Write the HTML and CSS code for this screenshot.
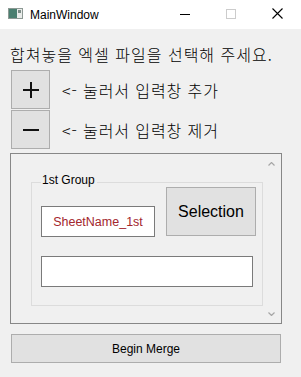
FILE: index.html
```html
<!DOCTYPE html>
<html lang="ko">
  <head>
    <meta charset="UTF-8" />
    <meta name="viewport" content="width=device-width, initial-scale=1.0" />
    <title>MainWindow</title>
    <link rel="stylesheet" href="styles.css">
  </head>

  <body>
    <div class="window">
      <div class="titlebar">
        <svg class="app-icon" width="15" height="11" viewBox="0 0 15 11">
          <rect x="0.5" y="0.5" width="14" height="10" fill="#e9ecea" stroke="#8d9994" />
          <rect x="1" y="1" width="8" height="9" fill="#4a7f70" />
          <rect x="10" y="2" width="3" height="3" fill="#7d8c87" />
        </svg>
        <span class="title">MainWindow</span>
        <div class="controls">
          <div class="control">
            <svg width="10" height="10" viewBox="0 0 10 10">
              <line x1="0" y1="5.5" x2="10" y2="5.5" stroke="#000" stroke-width="1" />
            </svg>
          </div>
          <div class="control">
            <svg width="10" height="10" viewBox="0 0 10 10">
              <rect x="0.5" y="0.5" width="9" height="9" fill="none" stroke="#cccccc" stroke-width="1" />
            </svg>
          </div>
          <div class="control">
            <svg width="11" height="11" viewBox="0 0 11 11">
              <path d="M0.5 0.5 L10.5 10.5 M10.5 0.5 L0.5 10.5" stroke="#000" stroke-width="1.1" />
            </svg>
          </div>
        </div>
      </div>

      <div class="content">
        <p class="prompt">합쳐놓을 엑셀 파일을 선택해 주세요.</p>

        <div class="row">
          <button class="square-btn" type="button">
            <svg width="16" height="16" viewBox="0 0 16 16">
              <path d="M0 8 H16 M8 0 V16" stroke="#111" stroke-width="2" />
            </svg>
          </button>
          <span class="hint">&lt;- 눌러서 입력창 추가</span>
        </div>
        <div class="row">
          <button class="square-btn" type="button">
            <svg width="16" height="16" viewBox="0 0 16 16">
              <path d="M0 8 H16" stroke="#111" stroke-width="2" />
            </svg>
          </button>
          <span class="hint">&lt;- 눌러서 입력창 제거</span>
        </div>

        <div class="scroll-area">
          <div class="scroll-body">
            <fieldset class="group">
              <legend>1st Group</legend>
              <div class="group-top">
                <div class="field sheet-name">SheetName_1st</div>
                <button class="select-btn" type="button">Selection</button>
              </div>
              <div class="field file-path"></div>
            </fieldset>
          </div>
          <div class="scrollbar">
            <svg width="7" height="4" viewBox="0 0 7 4">
              <path d="M0.5 3.5 L3.5 0.5 L6.5 3.5" fill="none" stroke="#a6a6a6" stroke-width="1.2" />
            </svg>
            <svg width="7" height="4" viewBox="0 0 7 4">
              <path d="M0.5 0.5 L3.5 3.5 L6.5 0.5" fill="none" stroke="#a6a6a6" stroke-width="1.2" />
            </svg>
          </div>
        </div>

        <button class="merge-btn" type="button">Begin Merge</button>
      </div>
    </div>
  </body>
</html>
```

FILE: styles.css
```css
* {
  margin: 0;
  padding: 0;
  box-sizing: border-box;
}

body {
  background-color: #f0f0f0;
  font-family: "Liberation Sans", Arial, sans-serif;
  width: 301px;
  height: 377px;
  overflow: hidden;
}

/* title bar */
.titlebar {
  height: 29px;
  background-color: #ffffff;
  display: flex;
  align-items: center;
}

.app-icon {
  margin-left: 8px;
  margin-top: -2px;
}

.title {
  margin-left: 7px;
  font-size: 12px;
  color: #000;
}

.controls {
  margin-left: auto;
  margin-right: 1px;
  display: flex;
  height: 29px;
}

.control {
  width: 46px;
  display: flex;
  justify-content: center;
  align-items: center;
  margin-top: -2px;
}

/* main content */
.content {
  padding-left: 10px;
  width: 282px;
}

.prompt {
  margin-top: 15px;
  font-family: "Noto Sans CJK KR", sans-serif;
  font-weight: 300;
  font-size: 16px;
  line-height: 20px;
  letter-spacing: 1px;
  white-space: nowrap;
  color: #000;
}

.row {
  display: flex;
  align-items: center;
  margin-top: 6px;
}

.row + .row {
  margin-top: 1px;
}

.square-btn {
  width: 39px;
  height: 39px;
  margin-left: 1px;
  background-color: #e1e1e1;
  border: 1px solid #adadad;
  display: flex;
  justify-content: center;
  align-items: center;
}

.hint {
  margin-left: 12px;
  font-family: "Noto Sans CJK KR", sans-serif;
  font-weight: 300;
  font-size: 16px;
  line-height: 20px;
  letter-spacing: 0.9px;
  color: #000;
}

/* scroll area */
.scroll-area {
  margin-top: 4px;
  width: 272px;
  height: 171px;
  border: 1px solid #878787;
  display: flex;
}

.scroll-body {
  width: 252px;
  padding-top: 21px;
  padding-left: 20px;
}

.scrollbar {
  width: 17px;
  display: flex;
  flex-direction: column;
  justify-content: space-between;
  align-items: center;
  padding: 8px 0 7px;
}

.group {
  width: 232px;
  border: 1px solid #dcdcdc;
  padding: 0 0 18px 9px;
}

.group legend {
  font-size: 12px;
  line-height: 10px;
  padding: 0 2px 4px 1px;
  color: #000;
}

.group-top {
  display: flex;
  align-items: flex-end;
  gap: 11px;
  height: 50px;
  margin-top: -2px;
}

.field {
  height: 31px;
  background-color: #ffffff;
  border: 1px solid #7a7a7a;
}

.sheet-name {
  width: 114px;
  display: flex;
  justify-content: center;
  align-items: center;
  font-size: 12.5px;
  color: #a3262d;
}

.select-btn {
  width: 90px;
  height: 49px;
  margin-bottom: 1px;
  align-self: flex-start;
  background-color: #e1e1e1;
  border: 1px solid #adadad;
  font-family: "Liberation Sans", Arial, sans-serif;
  font-size: 16px;
  color: #000;
}

.file-path {
  width: 212px;
  margin-top: 19px;
}

.merge-btn {
  display: block;
  margin-top: 10px;
  margin-left: 1px;
  width: 270px;
  height: 29px;
  background-color: #e1e1e1;
  border: 1px solid #adadad;
  font-family: "Liberation Sans", Arial, sans-serif;
  font-size: 12px;
  color: #000;
}
```
